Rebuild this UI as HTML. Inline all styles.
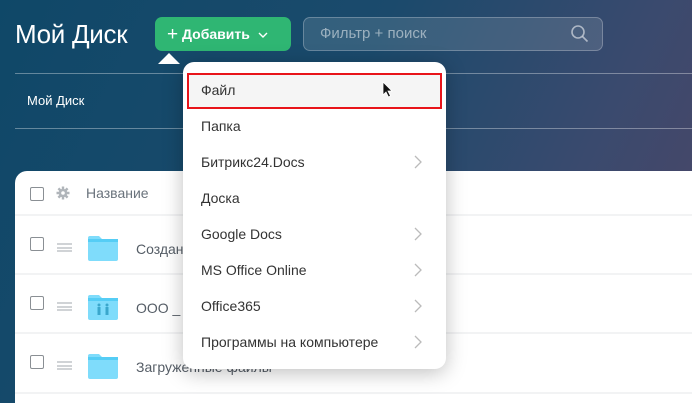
<!DOCTYPE html>
<html><head><meta charset="utf-8"><style>
*{box-sizing:border-box;margin:0;padding:0}
body{width:692px;height:403px;overflow:hidden;position:relative;font-family:"Liberation Sans",sans-serif;background:linear-gradient(115deg,#0f4868 0%,#1b4a6c 45%,#3a4a6e 75%,#4e4565 100%)}
.abs{position:absolute}
.title{left:15px;top:19px;color:#fff;font-size:26px;letter-spacing:-0.3px}
.add{left:155px;top:17px;width:136px;height:34px;background:#2fb673;border-radius:7px;color:#fff;font-size:14px;line-height:34px;padding-left:12px}
.search{left:303px;top:17px;width:300px;height:34px;border:1px solid rgba(255,255,255,.25);background:rgba(255,255,255,.12);border-radius:7px;color:rgba(255,255,255,.5);font-size:15px;line-height:32px;padding-left:16px}
.line{left:15px;right:0;height:1px;background:rgba(255,255,255,.35)}
.crumb{left:27px;top:93px;color:#fff;font-size:13px}
.panel{left:15px;top:171px;right:0;bottom:0;background:#fff;border-top-left-radius:12px}
.sep{left:15px;right:0;height:2px;background:#f2f3f4}
.cb{width:14px;height:14px;border:1.5px solid #8a8f94;border-radius:2px;background:#fff}
.ham{width:15px;height:9px;border-top:2px solid #d0d3d6;border-bottom:2px solid #d0d3d6}
.ham:after{content:"";position:absolute;left:0;right:0;top:1.5px;height:2px;background:#d0d3d6}
.rowt{font-size:14px;color:#555d66}
.menu{left:183px;top:62px;width:263px;height:307px;background:#fff;border-radius:11px;box-shadow:0 4px 20px rgba(0,0,0,.25)}
.item{position:absolute;left:18px;font-size:14px;color:#333}
.chev{position:absolute;left:230px}
</style></head><body>
<div class="abs title">Мой Диск</div>
<div class="abs add"><span style="font-size:19px;vertical-align:-1px">+</span> <b style="font-weight:bold">Добавить</b> <svg width="12" height="8" viewBox="0 0 12 8" style="margin-left:3px"><path d="M2 2l4 4 4-4" stroke="#fff" stroke-width="1.4" fill="none"/></svg></div>
<div class="abs search">Фильтр + поиск
<svg class="abs" style="left:266px;top:6px" width="20" height="20" viewBox="0 0 20 20"><circle cx="8" cy="8" r="6" stroke="rgba(255,255,255,.55)" stroke-width="1.6" fill="none"/><path d="M12.5 12.5l5 5" stroke="rgba(255,255,255,.55)" stroke-width="1.6"/></svg></div>
<div class="abs line" style="top:73px"></div>
<div class="abs line" style="top:128px"></div>
<div class="abs crumb">Мой Диск</div>
<div class="abs panel"></div>
<div class="abs sep" style="top:214px"></div>
<div class="abs sep" style="top:273px"></div>
<div class="abs sep" style="top:332px"></div>
<div class="abs sep" style="top:392px"></div>
<div class="abs cb" style="left:30px;top:187px"></div>
<svg class="abs" style="left:56px;top:186px" width="14" height="14" viewBox="0 0 14 14"><g stroke="#b0b5ba" stroke-width="2.4"><path d="M7 0.5v13M0.5 7h13M2.4 2.4l9.2 9.2M11.6 2.4l-9.2 9.2"/></g><circle cx="7" cy="7" r="4.3" fill="#b0b5ba"/><circle cx="7" cy="7" r="1.8" fill="#fff"/></svg>
<div class="abs rowt" style="left:86px;top:185px;color:#6a737c">Название</div>
<div class="abs cb" style="left:30px;top:237px"></div><div class="abs ham" style="left:57px;top:243px"></div>
<svg class="abs" style="left:88px;top:236px" width="30" height="25"><path d="M2 0h9l3 3h14a2 2 0 0 1 2 2v18a2 2 0 0 1-2 2H2a2 2 0 0 1-2-2V2a2 2 0 0 1 2-2z" fill="#7fdcfb"/><rect x="0" y="3" width="30" height="3" fill="#55cdf5"/></svg>
<div class="abs rowt" style="left:136px;top:241px">Создан</div>
<div class="abs cb" style="left:30px;top:296px"></div><div class="abs ham" style="left:57px;top:302px"></div>
<svg class="abs" style="left:88px;top:295px" width="30" height="25"><path d="M2 0h9l3 3h14a2 2 0 0 1 2 2v18a2 2 0 0 1-2 2H2a2 2 0 0 1-2-2V2a2 2 0 0 1 2-2z" fill="#7fdcfb"/><rect x="0" y="3" width="30" height="3" fill="#55cdf5"/><g fill="#3aa7cc"><circle cx="11" cy="10" r="1.5"/><rect x="9.5" y="12" width="3" height="8"/><circle cx="19" cy="10" r="1.5"/><rect x="17.5" y="12" width="3" height="8"/></g></svg>
<div class="abs rowt" style="left:136px;top:300px">ООО _</div>
<div class="abs cb" style="left:30px;top:355px"></div><div class="abs ham" style="left:57px;top:361px"></div>
<svg class="abs" style="left:88px;top:354px" width="30" height="25"><path d="M2 0h9l3 3h14a2 2 0 0 1 2 2v18a2 2 0 0 1-2 2H2a2 2 0 0 1-2-2V2a2 2 0 0 1 2-2z" fill="#7fdcfb"/><rect x="0" y="3" width="30" height="3" fill="#55cdf5"/></svg>
<div class="abs rowt" style="left:136px;top:359px">Загруженные файлы</div>
<svg class="abs" style="left:158px;top:52px" width="22" height="12"><path d="M0 12L11 1 22 12z" fill="#fff"/></svg>
<div class="abs menu">
<div style="position:absolute;left:4px;top:11px;width:255px;height:36px;background:#f5f5f5;border:2px solid #e8141a"></div>
<div class="item" style="top:20px">Файл</div>
<div class="item" style="top:56px">Папка</div>
<div class="item" style="top:92px">Битрикс24.Docs</div>
<div class="item" style="top:128px">Доска</div>
<div class="item" style="top:164px">Google Docs</div>
<div class="item" style="top:200px">MS Office Online</div>
<div class="item" style="top:236px">Office365</div>
<div class="item" style="top:272px">Программы на компьютере</div>
<svg class="chev" style="top:92px" width="10" height="16"><path d="M2 2l6 6-6 6" stroke="#bbb" stroke-width="1.3" fill="none"/></svg>
<svg class="chev" style="top:164px" width="10" height="16"><path d="M2 2l6 6-6 6" stroke="#bbb" stroke-width="1.3" fill="none"/></svg>
<svg class="chev" style="top:200px" width="10" height="16"><path d="M2 2l6 6-6 6" stroke="#bbb" stroke-width="1.3" fill="none"/></svg>
<svg class="chev" style="top:236px" width="10" height="16"><path d="M2 2l6 6-6 6" stroke="#bbb" stroke-width="1.3" fill="none"/></svg>
<svg class="chev" style="top:272px" width="10" height="16"><path d="M2 2l6 6-6 6" stroke="#bbb" stroke-width="1.3" fill="none"/></svg>
<svg class="abs" style="left:199px;top:19px" width="12" height="18"><path d="M1 1v13l3-3 2.5 5 2-1-2.5-5h4z" fill="#111" stroke="#fff" stroke-width=".8"/></svg>
</div>
</body></html>
